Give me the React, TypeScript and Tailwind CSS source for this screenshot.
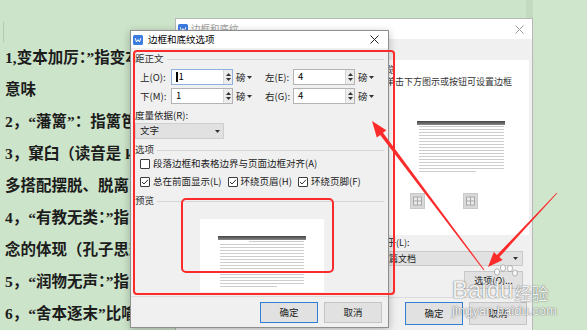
import React from "react";

const ui: React.CSSProperties = { fontFamily: '"Noto Sans CJK SC", "Noto Sans", sans-serif' };
const doc: React.CSSProperties = { fontFamily: '"Liberation Serif", "Noto Sans CJK SC", serif' };

function WpsIcon() {
  return (
    <svg width="10" height="10" viewBox="0 0 10 10" className="shrink-0">
      <rect x="0" y="0" width="10" height="10" rx="1.5" fill="#3b7be0" />
      <path d="M2.2 3.2 L3.5 7 L5 4.6 L6.5 7 L7.8 3.2" fill="none" stroke="#fff" strokeWidth="1" strokeLinejoin="round" />
    </svg>
  );
}

function CloseX({ color }: { color: string }) {
  return (
    <svg width="9" height="9" viewBox="0 0 9 9" className="shrink-0">
      <path d="M0.5 0.5 L8.5 8.5 M8.5 0.5 L0.5 8.5" stroke={color} strokeWidth="1" />
    </svg>
  );
}

function Caret() {
  return (
    <svg width="5" height="3" viewBox="0 0 5 3" className="shrink-0">
      <path d="M0 0 L2.5 3 L5 0Z" fill="#333" />
    </svg>
  );
}

function Spin() {
  return (
    <div className="flex flex-col w-[9px] bg-[#ececec] border-l border-[#d6d6d6] items-center justify-center gap-[2px]">
      <svg width="5" height="3" viewBox="0 0 5 3">
        <path d="M0 3 L2.5 0 L5 3Z" fill="#333" />
      </svg>
      <svg width="5" height="3" viewBox="0 0 5 3">
        <path d="M0 0 L2.5 3 L5 0Z" fill="#333" />
      </svg>
    </div>
  );
}

function NumInput({ value, focused }: { value: string; focused?: boolean }) {
  return (
    <div
      className={
        focused
          ? "flex h-[16px] w-[62px] shrink-0 items-stretch border border-[#8fb0dc] bg-white"
          : "flex h-[16px] w-[62px] shrink-0 items-stretch border border-[#b4b4b4] bg-white"
      }
    >
      <div className="flex-1 flex items-center pl-[4px] text-[9.5px] leading-none text-black">
        {focused && <span className="w-[1.5px] h-[10px] bg-black mr-[1px]" />}
        {value}
      </div>
      <Spin />
    </div>
  );
}

function Unit() {
  return (
    <div className="w-[32px] shrink-0 pl-[3px] flex items-center gap-[1px] text-[9.5px] text-[#222]">
      <span>磅</span>
      <Caret />
    </div>
  );
}

function GroupHeader({ label, mt }: { label: string; mt: string }) {
  return (
    <div className={`${mt} h-[12px] flex items-center`}>
      <span className="text-[9.5px] leading-none text-[#333]">{label}</span>
      <div className="flex-1 h-px bg-[#d6d6d6] ml-[3px]" />
    </div>
  );
}

function Check({ checked }: { checked?: boolean }) {
  return (
    <div className="w-[10px] h-[10px] shrink-0 bg-white border border-[#3c3c3c] rounded-[1px] flex items-center justify-center">
      {checked && (
        <svg width="8" height="8" viewBox="0 0 8 8">
          <path d="M1 4 L3 6 L7 1.8" fill="none" stroke="#333" strokeWidth="1" />
        </svg>
      )}
    </div>
  );
}

function CheckItem({ label, checked, cls }: { label: string; checked?: boolean; cls?: string }) {
  return (
    <div className={`flex items-center ${cls ?? ""}`}>
      <Check checked={checked} />
      <span className="ml-[3px] text-[9.5px] leading-none text-[#222] whitespace-nowrap">{label}</span>
    </div>
  );
}

function PreviewDoc({ lineW, shortW, firstOffset }: { lineW: number; shortW: number; firstOffset: number }) {
  const lines = Array.from({ length: 14 });
  return (
    <div className="flex flex-col">
      <div className="h-[4px] w-[88px] bg-gradient-to-b from-[#444] to-[#8a8a8a]" />
      <div className="ml-[2px] flex flex-col">
        <div className="mt-[1px] h-[1px] bg-[#cdcdcd]" style={{ width: lineW - firstOffset, marginLeft: firstOffset }} />
        {lines.map((_, i) => (
          <div key={i} className="mt-[2px] h-[1px] bg-[#cdcdcd]" style={{ width: lineW }} />
        ))}
        <div className="mt-[2px] h-[1px] bg-[#cdcdcd]" style={{ width: shortW }} />
      </div>
    </div>
  );
}

function GridIcon() {
  return (
    <svg width="15" height="16" viewBox="0 0 15 16" className="shrink-0">
      <rect x="0.5" y="0.5" width="14" height="15" fill="#d8d8d8" stroke="#c9c9c9" />
      <rect x="3.5" y="4" width="8" height="8" fill="#ececec" stroke="#a8a8a8" />
      <path d="M7.5 4 V12 M3.5 8 H11.5" stroke="#a8a8a8" />
    </svg>
  );
}

function Btn({ children, primary, h }: { children: React.ReactNode; primary?: boolean; h: string }) {
  return (
    <div
      className={
        primary
          ? `${h} w-[58px] flex items-center justify-center bg-[#e1e1e1] border border-[#2f7fd6] text-[9.5px] text-[#222]`
          : `${h} w-[58px] flex items-center justify-center bg-[#e1e1e1] border border-[#c4c4c4] text-[9.5px] text-[#222]`
      }
    >
      {children}
    </div>
  );
}

function DocText() {
  const lines = [
    "1,变本加厉：”指变本加厉",
    "意味",
    "2，“藩篱”：指篱笆",
    "3，窠臼（读音是 kē jiù）",
    "多搭配摆脱、脱离",
    "4，“有教无类：”指",
    "念的体现（孔子思想）",
    "5，“润物无声：”指",
    "6，“舍本逐末”比喻",
  ];
  return (
    <div className="pt-[42px] pl-[5px] text-[15.5px] font-bold leading-[32px] text-[#1c1c1c] whitespace-nowrap" style={doc}>
      {lines.map((l, i) => (
        <div key={i}>{l}</div>
      ))}
    </div>
  );
}

function BackDialog() {
  return (
    <div className="absolute left-[175px] top-[18px] w-[358px] h-[320px] flex flex-col bg-[#f0f0f0] border border-[#b8b8b8]" style={ui}>
      <div className="h-[20px] shrink-0 bg-white flex items-center pl-[2px] pr-[8px]">
        <WpsIcon />
        <span className="ml-[3px] text-[9.5px] leading-none text-[#a3a3a3]">边框和底纹</span>
        <div className="flex-1" />
        <CloseX color="#9c9c9c" />
      </div>
      <div className="h-[258px] shrink-0 flex">
        <div className="ml-[190px] w-[163px] pt-[21px] flex flex-col">
          <div className="h-[175px] bg-white flex flex-col pt-[4px]">
            <div className="h-[12px] pl-[11px] text-[9px] leading-[12px] text-[#333]">预览</div>
            <div className="h-[12px] pl-[20px] text-[9px] leading-[12px] text-[#333] whitespace-nowrap">单击下方图示或按钮可设置边框</div>
            <div className="mt-[33px] ml-[51px]">
              <PreviewDoc lineW={85} shortW={57} firstOffset={0} />
            </div>
            <div className="mt-[21px] ml-[44px] flex gap-[38px]">
              <GridIcon />
              <GridIcon />
            </div>
          </div>
          <div className="mt-[2px] h-[12px] pl-[3px] text-[9px] leading-[12px] text-[#222]">应用于(L):</div>
          <div className="mt-[2px] ml-[5px] w-[152px] h-[15px] bg-[#e1e1e1] border border-[#c9c9c9] flex items-center pl-[8px] pr-[4px] text-[9px] leading-none text-[#222]">
            <span className="flex-1">整篇文档</span>
            <Caret />
          </div>
          <div className="mt-[5px] self-end mr-[6px] w-[59px] h-[18px] bg-[#e1e1e1] border border-[#c9c9c9] flex items-center justify-center text-[9px] leading-none text-[#222]">
            选项(O)...
          </div>
        </div>
      </div>
      <div className="border-t border-[#dcdcdc] flex justify-end gap-[6px] pr-[5px] pt-[4px]">
        <Btn primary h="h-[23px]">确定</Btn>
        <Btn h="h-[23px]">取消</Btn>
      </div>
    </div>
  );
}

function FrontDialog() {
  return (
    <div
      className="absolute left-[130px] top-[30px] w-[259px] h-[298px] flex flex-col bg-[#f0f0f0] border border-[#8e8e8e] shadow-[0_2px_8px_rgba(0,0,0,0.25)]"
      style={ui}
    >
      <div className="h-[17px] shrink-0 bg-white flex items-center pl-[2px] pr-[9px]">
        <WpsIcon />
        <span className="ml-[5px] text-[9.5px] leading-none text-black">边框和底纹选项</span>
        <div className="flex-1" />
        <CloseX color="#222" />
      </div>
      <div className="flex flex-col px-[4px]">
        <GroupHeader label="距正文" mt="mt-[5px]" />
        <div className="mt-[4px] h-[16px] flex items-center pl-[5px]">
          <span className="w-[31px] shrink-0 text-[9.5px] text-[#222]">上(O):</span>
          <NumInput value="1" focused />
          <Unit />
          <span className="w-[28px] shrink-0 text-[9.5px] text-[#222]">左(E):</span>
          <NumInput value="4" />
          <Unit />
        </div>
        <div className="mt-[3px] h-[16px] flex items-center pl-[5px]">
          <span className="w-[31px] shrink-0 text-[9.5px] text-[#222]">下(M):</span>
          <NumInput value="1" />
          <Unit />
          <span className="w-[28px] shrink-0 text-[9.5px] text-[#222]">右(G):</span>
          <NumInput value="4" />
          <Unit />
        </div>
        <div className="mt-[6px] h-[12px] flex items-center text-[9.5px] leading-none text-[#222]">度量依据(R):</div>
        <div className="mt-[1px] w-[89px] h-[16px] bg-[#e1e1e1] border border-[#cfcfcf] flex items-center pl-[4px] pr-[3px] text-[9.5px] leading-none text-[#222]">
          <span className="flex-1">文字</span>
          <Caret />
        </div>
        <GroupHeader label="选项" mt="mt-[5px]" />
        <div className="mt-[2px] h-[12px] flex items-center pl-[5px]">
          <CheckItem label="段落边框和表格边界与页面边框对齐(A)" />
        </div>
        <div className="mt-[6px] h-[12px] flex items-center pl-[5px]">
          <CheckItem label="总在前面显示(L)" checked />
          <CheckItem label="环绕页眉(H)" checked cls="ml-[6px]" />
          <CheckItem label="环绕页脚(F)" checked cls="ml-[6px]" />
        </div>
        <GroupHeader label="预览" mt="mt-[7px]" />
        <div className="mt-[12px] ml-[65px] w-[124px] h-[73px] bg-white pt-[17px] pl-[18px]">
          <PreviewDoc lineW={84} shortW={57} firstOffset={29} />
        </div>
      </div>
      <div className="mt-[4px] border-t border-[#dcdcdc] flex justify-end gap-[6px] pr-[6px] pt-[5px]">
        <Btn primary h="h-[21px]">确定</Btn>
        <Btn h="h-[21px]">取消</Btn>
      </div>
    </div>
  );
}

function Annotations() {
  const red = "#fb2b2b";
  return (
    <svg className="absolute left-0 top-0 pointer-events-none" width="587" height="330" viewBox="0 0 587 330">
      <rect x="134" y="51" width="260" height="243" rx="3" fill="none" stroke={red} strokeWidth="2" />
      <rect x="182" y="199" width="151" height="73" rx="4" fill="none" stroke={red} strokeWidth="2" />
      <polygon
        points="372,121 386.4,130.2 383,132.7 484.4,269.7 483.6,270.3 380.2,134.9 376.8,137.4"
        fill={red}
      />
      <polygon
        points="488,267 502.6,260.1 499.4,257.1 557.3,193.3 556.7,192.7 497,254.9 493.8,251.9"
        fill={red}
      />
    </svg>
  );
}

function Watermark() {
  return (
    <>
      <svg className="absolute left-[490px] top-[262px] pointer-events-none" width="30" height="22" viewBox="0 0 30 22">
        <g fill="rgba(255,255,255,0.85)" stroke="rgba(110,110,110,0.6)" strokeWidth="0.8">
          <ellipse cx="7" cy="10" rx="2.6" ry="3.2" />
          <ellipse cx="13" cy="6" rx="2.6" ry="3.2" />
          <ellipse cx="20" cy="6.5" rx="2.6" ry="3.2" />
          <ellipse cx="25" cy="11" rx="2.4" ry="3" />
        </g>
      </svg>
      <div className="absolute left-[452px] top-[278px] flex flex-col pointer-events-none text-[rgba(255,255,255,0.92)] [text-shadow:0_0_1px_rgba(80,80,80,0.9),0_0_2px_rgba(80,80,80,0.4)]">
        <div className="flex items-end h-[24px] leading-none">
          <span className="text-[24px]" style={{ fontFamily: '"Liberation Sans", Arial, sans-serif' }}>
            Baidu
          </span>
          <span className="text-[17px] ml-[1px] pb-[1px]" style={ui}>
            经验
          </span>
        </div>
        <div className="text-[13px] leading-none mt-[2px]" style={{ fontFamily: '"Liberation Sans", Arial, sans-serif' }}>
          jingyan.baidu.com
        </div>
      </div>
    </>
  );
}

export default function App() {
  return (
    <div className="relative w-[587px] h-[330px] overflow-hidden bg-[#cce4ca]">
      <div className="absolute left-[526px] top-0 w-[7px] h-[330px] bg-[#c3dac1]" />
      <div className="absolute left-[533px] top-0 w-[54px] h-[330px] bg-[#cfe6cd]" />
      <div className="absolute left-[3px] top-[22px] w-px h-[20px] bg-[#b5c9b4]" />
      <DocText />
      <BackDialog />
      <FrontDialog />
      <Annotations />
      <Watermark />
    </div>
  );
}
